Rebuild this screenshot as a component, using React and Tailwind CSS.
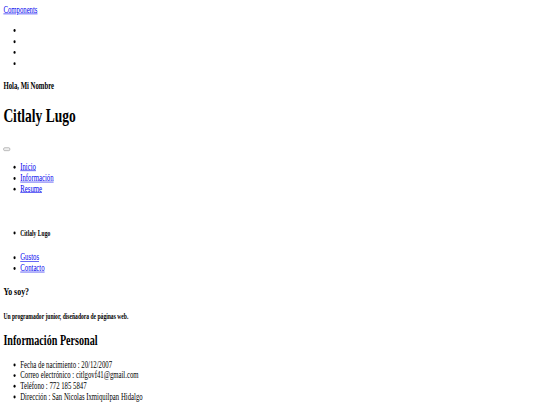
export default function App() {
  return (
    <div className="h-screen w-screen overflow-hidden bg-white">
      {/* page rendered at desktop width, then squeezed into the frame */}
      <div className="w-[1280px] origin-top-left scale-x-[0.421875] scale-y-[0.592] p-2 font-['Liberation_Serif','Times_New_Roman',serif] text-[16px] leading-[1.15] text-black">
        <div>
          <a href="#" className="text-[#0000ee] underline">
            Components
          </a>
        </div>
        <ul className="my-4 list-disc pl-10">
          <li className="h-[18.4px]"></li>
          <li className="h-[18.4px]"></li>
          <li className="h-[18.4px]"></li>
          <li className="h-[18.4px]"></li>
        </ul>
        <h4 className="my-[21.28px] text-[16px] font-bold">Hola, Mi Nombre</h4>
        <h1 className="my-[21.44px] text-[32px] font-bold">Citlaly Lugo</h1>
        <nav className="pt-[3.5px]">
          <div className="h-[18.4px] pt-[10px]">
            <button className="block h-[6px] w-[16px] rounded-[3px] border border-[#858585] bg-[#efefef]"></button>
          </div>
          <ul className="my-4 list-disc pl-10">
            <li>
              <a href="#" className="text-[#0000ee] underline">Inicio</a>
            </li>
            <li>
              <a href="#" className="text-[#0000ee] underline">Información</a>
            </li>
            <li>
              <a href="#" className="text-[#0000ee] underline">Resume</a>
            </li>
          </ul>
        </nav>
        <ul className="mt-[56px] mb-4 list-disc pl-10">
          <li>
            <h5 className="mb-[24px] text-[13.28px] font-bold">Citlaly Lugo</h5>
          </li>
          <li>
            <a href="#" className="text-[#0000ee] underline">Gustos</a>
          </li>
          <li>
            <a href="#" className="text-[#0000ee] underline">Contacto</a>
          </li>
        </ul>
        <h3 className="my-[18.72px] text-[18.72px] font-bold">Yo soy?</h3>
        <h5 className="mt-[24.5px] mb-[19.5px] text-[13.28px] font-bold">
          Un programador junior, diseñadora de páginas web.
        </h5>
        <h2 className="mt-[19.92px] mb-[17.5px] text-[24px] font-bold">Información Personal</h2>
        <ul className="my-4 list-disc pl-10 leading-[18px]">
          <li>Fecha de nacimiento : 20/12/2007</li>
          <li>Correo electrónico : citlgovf41@gmail.com</li>
          <li>Teléfono : 772 185 5847</li>
          <li>Dirección : San Nicolas Ixmiquilpan Hidalgo</li>
        </ul>
      </div>
    </div>
  )
}
